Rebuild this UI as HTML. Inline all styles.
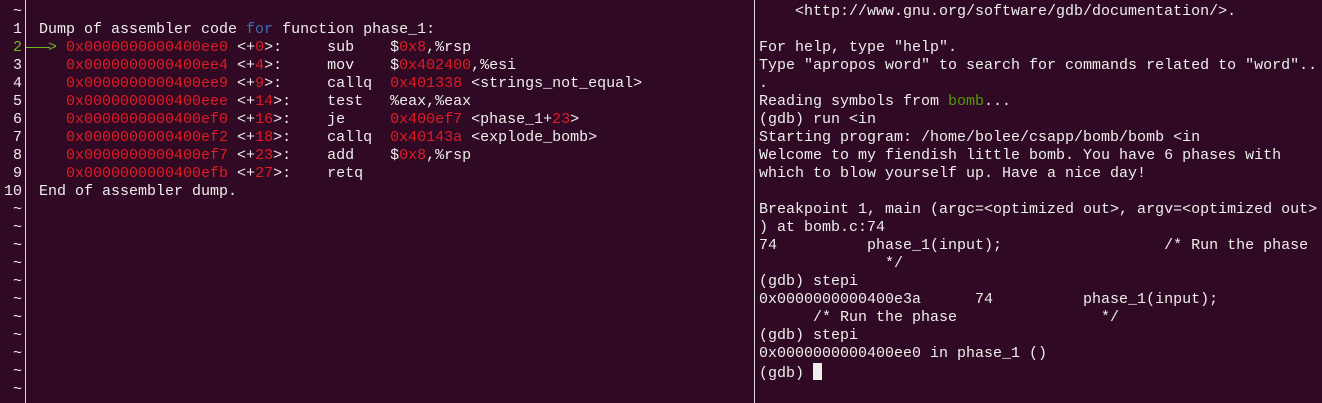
<!DOCTYPE html>
<html><head><meta charset="utf-8"><style>
html,body{margin:0;padding:0;background:#300a24;width:1322px;height:403px;overflow:hidden}
pre{margin:0;font-family:"Liberation Mono","DejaVu Sans Mono",monospace;font-size:15px;line-height:18px;color:#eeeeec;position:absolute;white-space:pre}
.r{color:#e01b24}.b{color:#3d6eb4}.g{color:#4e9a06}.gl{color:#6ab825}
#sep{position:absolute;left:754px;top:0;width:1px;height:403px;background:#d8d8d8}
#gut{position:absolute;left:25px;top:0;width:1px;height:403px;background:#d8d8d8}
.cur{display:inline-block;width:9px;height:17px;background:#eeeeec;vertical-align:-3px}
</style></head><body>
<div id="gut"></div><div id="sep"></div>
<pre style="left:0;top:3px;width:22px;text-align:right">~
1
<span class="gl">2</span>
3
4
5
6
7
8
9
10
~
~
~
~
~
~
~
~
~
~
~</pre>
<div style="position:absolute;left:26px;top:47px;width:24px;height:1px;background:#6ab825"></div>
<pre style="left:39px;top:21px">Dump of assembler code <span class="b">for</span> function phase_1:
<span class="gl"> &gt;</span> <span class="r">0x0000000000400ee0</span> &lt;+<span class="r">0</span>&gt;:     sub    $<span class="r">0x8</span>,%rsp
   <span class="r">0x0000000000400ee4</span> &lt;+<span class="r">4</span>&gt;:     mov    $<span class="r">0x402400</span>,%esi
   <span class="r">0x0000000000400ee9</span> &lt;+<span class="r">9</span>&gt;:     callq  <span class="r">0x401338</span> &lt;strings_not_equal&gt;
   <span class="r">0x0000000000400eee</span> &lt;+<span class="r">14</span>&gt;:    test   %eax,%eax
   <span class="r">0x0000000000400ef0</span> &lt;+<span class="r">16</span>&gt;:    je     <span class="r">0x400ef7</span> &lt;phase_1+<span class="r">23</span>&gt;
   <span class="r">0x0000000000400ef2</span> &lt;+<span class="r">18</span>&gt;:    callq  <span class="r">0x40143a</span> &lt;explode_bomb&gt;
   <span class="r">0x0000000000400ef7</span> &lt;+<span class="r">23</span>&gt;:    add    $<span class="r">0x8</span>,%rsp
   <span class="r">0x0000000000400efb</span> &lt;+<span class="r">27</span>&gt;:    retq
End of assembler dump.</pre>
<pre style="left:759px;top:3px">    &lt;http://www.gnu.org/software/gdb/documentation/&gt;.

For help, type "help".
Type "apropos word" to search for commands related to "word"..
.
Reading symbols from <span class="g">bomb</span>...
(gdb) run &lt;in
Starting program: /home/bolee/csapp/bomb/bomb &lt;in
Welcome to my fiendish little bomb. You have 6 phases with
which to blow yourself up. Have a nice day!

Breakpoint 1, main (argc=&lt;optimized out&gt;, argv=&lt;optimized out&gt;
) at bomb.c:74
74          phase_1(input);                  /* Run the phase
              */
(gdb) stepi
0x0000000000400e3a      74          phase_1(input);
      /* Run the phase                */
(gdb) stepi
0x0000000000400ee0 in phase_1 ()
(gdb) <span class="cur"></span></pre>
</body></html>
